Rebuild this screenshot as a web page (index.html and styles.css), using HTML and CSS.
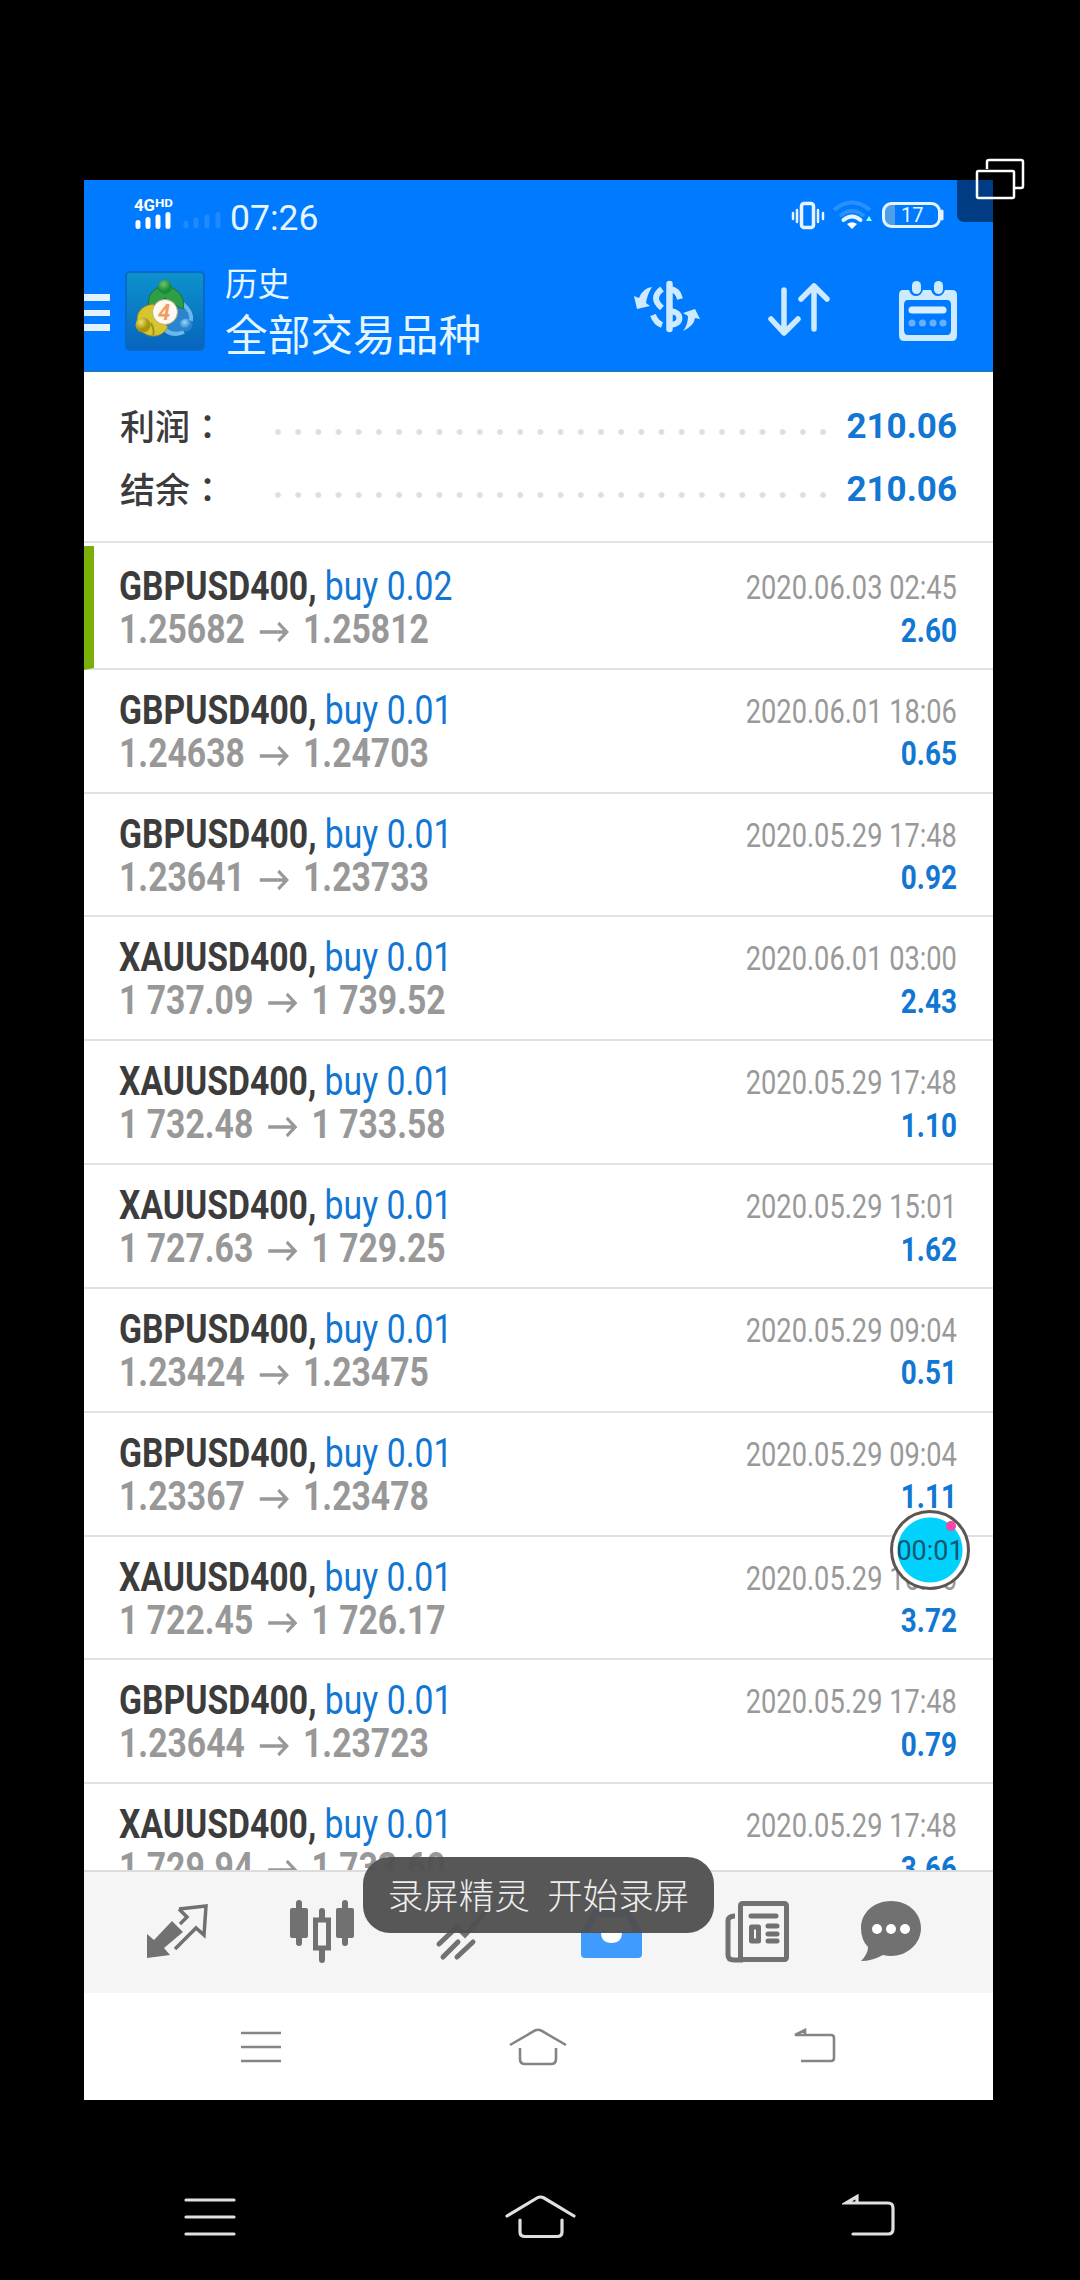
FILE: index.html
```html
<!DOCTYPE html>
<html lang="zh-CN">
<head>
<meta charset="utf-8">
<title>历史</title>
<link rel="stylesheet" href="styles.css">
</head>
<body>
<main class="screen">
  <header class="header">
    <div class="status">
      <svg class="signal" width="90" height="34" viewBox="0 0 90 34">
        <text x="0" y="13" font-size="16" font-weight="700" fill="#fff" textLength="21" lengthAdjust="spacingAndGlyphs">4G</text>
        <text x="21" y="9" font-size="11" font-weight="700" fill="#fff" textLength="18" lengthAdjust="spacingAndGlyphs">HD</text>
        <g stroke="#fff" stroke-width="5" stroke-linecap="round"><path d="M4 24.500V28.500M14 21.500V28.500M24 19V28.500M34 16.500V28.500"/></g>
        <g stroke="#2089ff" stroke-width="5" stroke-linecap="round"><path d="M52 25V28M62 22V28M73 19V28M84 16.500V28"/></g>
      </svg>
      <time class="clock">07:26</time>
      <svg class="device" width="154" height="34" viewBox="0 0 154 34" fill="none" stroke="#e6f4ff">
        <rect x="10.500" y="4.500" width="12" height="24" rx="2.500" stroke-width="3.500"/>
        <path d="M2 14v6M6 11v12M27 11v12M32 14v6" stroke-width="2.500" stroke-linecap="round"/>
        <path d="M43 11Q61 -4 79 11M49 17Q61 7 73 17" stroke="#2a90ff" stroke-width="4"/>
        <path d="M52.500 21Q61 14 69.500 21" stroke-width="4" stroke-linecap="round"/>
        <path d="M56 25Q61 21.500 66 25L61 30Z" fill="#fff" stroke="none"/>
        <path d="M78 17l3 5h-6z" fill="#9ff" stroke="none"/>
        <rect x="94" y="6" width="10" height="20" fill="#4f9fe8" stroke="none"/>
        <rect x="92.500" y="4.500" width="56" height="23" rx="8" stroke-width="3"/>
        <path d="M151 12v8" stroke-width="3" stroke-linecap="round"/>
        <text x="110" y="23" font-size="20" fill="#e6f4ff" stroke="none">17</text>
      </svg>
    </div>
    <div class="appbar">
      <svg class="burger" width="26" height="40" viewBox="0 0 26 40" fill="#e2f3ff"><path d="M0 1h26v7H0zM0 17h26v6H0zM0 31h26v7H0z"/></svg>
      <svg class="logo" width="80" height="80" viewBox="0 0 80 80">
        <defs>
          <linearGradient id="sky" x2="0" y2="1"><stop stop-color="#0d93cc"/><stop offset="1" stop-color="#0764bd"/></linearGradient>
          <radialGradient id="green" cx=".4" cy=".3"><stop stop-color="#6fc468"/><stop offset="1" stop-color="#198c3c"/></radialGradient>
          <radialGradient id="gold" cx=".35" cy=".3"><stop stop-color="#eee36a"/><stop offset="1" stop-color="#a8920e"/></radialGradient>
          <radialGradient id="blue" cx=".4" cy=".3"><stop stop-color="#9bd6f8"/><stop offset="1" stop-color="#2582cc"/></radialGradient>
        </defs>
        <rect x="1" y="1" width="78" height="78" rx="4" fill="url(#sky)" stroke="#0a69c8" stroke-width="2"/>
        <path d="M36 54Q46 68 61 60Q67 50 65 42Q62 33 55 30L50 48Z" fill="#2a84cf"/>
        <path d="M57 32Q68 41 66 50M36 54Q45 67 59 61" fill="none" stroke="#6bb9ec" stroke-width="4"/>
        <path d="M24 37C21 22 31 16 40 15C52 16 61 26 58 38L48 33L40 27L32 33Z" fill="#2f9f45" stroke="#176f38"/>
        <path d="M29 33C12 35 9 47 15 59C24 68 37 67 43 56L30 43Z" fill="#d5c62f" stroke="#8c8930"/>
        <path d="M26 52Q30 60 28 64" fill="none" stroke="#a0901c" stroke-width="2"/>
        <circle cx="40" cy="16" r="7" fill="url(#green)"/>
        <circle cx="18" cy="54" r="7.500" fill="url(#gold)"/>
        <circle cx="61" cy="54" r="6.500" fill="url(#blue)"/>
        <circle cx="40" cy="41" r="12.500" fill="#fff8f0" stroke="#bfae80"/>
        <text x="39" y="49" font-size="22" font-weight="700" font-style="italic" text-anchor="middle" fill="#eda05f">4</text>
      </svg>
      <div class="titles">
        <div class="subtitle">历史</div>
        <h1 class="title">全部交易品种</h1>
      </div>
      <div class="actions">
        <svg width="66" height="60" viewBox="0 0 66 60" fill="none" stroke="#cdeaff" stroke-width="6">
          <path d="M35.500 5V50" stroke-width="6.500" stroke-linecap="round"/>
          <path d="M28 10Q16 19 28 29M36 10Q44 11 46 20M36 32C49 33 48 46 36 46M19 36Q22 44 28 46"/>
          <path d="M18 8Q9 9 5 19L0 17L3 30L16 27L12 24Q13 16 18 8ZM49 52Q54 46 54 37L49 34L61 30L66 40L61 39Q60 47 49 52Z" fill="#cdeaff" stroke="none"/>
        </svg>
        <svg width="64" height="60" viewBox="0 0 64 60" fill="none" stroke="#cdeaff" stroke-width="5.500" stroke-linecap="round" stroke-linejoin="round"><path d="M17 11V54M4 40L17 54L31 40M47 50V7M34 20L47 7L60 20"/></svg>
        <svg width="60" height="64" viewBox="0 0 60 64">
          <path fill-rule="evenodd" fill="#cdeaff" d="M5 11H11Q13 17 18 17T25 11H33Q35 17 40 17T47 11H54Q59 11 59 16V56Q59 62 54 62H6Q1 62 1 56V16Q1 11 5 11ZM10 21Q6 21 6 26V51Q6 56 10 56H49Q53 56 53 51V26Q53 21 49 21Z"/>
          <rect x="14" y="2" width="9" height="13" rx="4.500" fill="#cdeaff"/><rect x="36" y="2" width="9" height="13" rx="4.500" fill="#cdeaff"/>
          <path d="M14 31H45" stroke="#d8efff" stroke-width="7" stroke-linecap="round"/>
          <g fill="#65b0ff"><circle cx="14" cy="44" r="3.500"/><circle cx="24.500" cy="44" r="3.500"/><circle cx="35" cy="44" r="3.500"/><circle cx="45" cy="44" r="3.500"/></g>
        </svg>
      </div>
    </div>
  </header>

  <section class="summary">
    <div class="total"><span class="total-name">利润<i lang="zh-TW">：</i></span><span class="dots"></span><b class="total-value">210.06</b></div>
    <div class="total"><span class="total-name">结余<i lang="zh-TW">：</i></span><span class="dots"></span><b class="total-value">210.06</b></div>
  </section>

  <section class="deals" id="deals"></section>

  <nav class="tabs">
    <svg width="64" height="66" viewBox="0 0 64 66"><path d="M2 34L9 40L27 21L38 32L19 48L25 55L2 58Z" fill="#717171"/><path d="M34 9L61 6L59 35L51 28L30 49M34 9L42 17L35 24" fill="none" stroke="#717171" stroke-width="3.500"/></svg>
    <svg width="64" height="66" viewBox="0 0 64 66" fill="#717171"><rect y="8" width="18" height="30" rx="2"/><rect x="46" y="8" width="18" height="30" rx="2"/><path d="M9 3V43M55 3V43M32 11V60" stroke="#717171" stroke-width="6" stroke-linecap="round"/><rect x="25.500" y="20" width="13" height="28" fill="#f5f5f5" stroke="#717171" stroke-width="5"/></svg>
    <svg width="64" height="66" viewBox="0 0 64 66" fill="none" stroke="#717171" stroke-width="5" stroke-linecap="round"><path d="M4 44L22 27L30 35L50 13M8 57L23 42M22 57L38 42"/></svg>
    <svg width="64" height="66" viewBox="0 0 64 66"><path d="M13 10H50L62 32V54Q62 58 58 58H5Q1 58 1 54V32Z" fill="#409bff"/><path d="M17 17H46L53 32H42Q42 43 31.500 43T21 32H10Z" fill="#fff"/></svg>
    <svg width="64" height="66" viewBox="0 0 64 66" fill="none" stroke="#717171" stroke-width="5" stroke-linejoin="round"><rect x="15.500" y="3.500" width="46" height="56" rx="2"/><path d="M10 16Q3 16 3 21V55Q3 60 9 60H18"/><path d="M26 16H51M43 26H52M43 34H52M43 41H52" stroke-linecap="round"/><rect x="26.500" y="27" width="7" height="14"/></svg>
    <svg class="chat" width="64" height="66" viewBox="0 0 64 66"><path d="M32 1C48 1 62 12 62 28S48 56 32 56Q28 56 24 55Q13 61 2 61Q9 54 9 47Q2 40 2 28C2 12 16 1 32 1Z" fill="#717171"/><g fill="#fff"><circle cx="18" cy="29" r="5"/><circle cx="32" cy="29" r="5"/><circle cx="46" cy="29" r="5"/></g></svg>
  </nav>

  <nav class="softkeys">
    <svg width="42" height="38" viewBox="0 0 42 38"><path d="M1 5H41M1 19H41M1 33H41"/></svg>
    <svg width="60" height="38" viewBox="0 0 60 38"><path d="M2 17L27 2.500Q30 1 33 2.500L58 17M12 20V31Q12 36 17 36H43Q48 36 48 31V20"/></svg>
    <svg width="44" height="38" viewBox="0 0 44 38"><path d="M8 33H38Q41 33 41 30V10Q41 7 38 7H2L12 2V7"/></svg>
  </nav>

  <div class="record"><span>00:01</span></div>
  <div class="toast">录屏精灵&nbsp; 开始录屏</div>
  <div class="corner"></div>
</main>

<svg class="windows" width="52" height="42" viewBox="0 0 52 42" fill="none" stroke="#fff" stroke-width="2.500"><path d="M12 11V4Q12 2 14 2H46Q48 2 48 4V28Q48 30 46 30H40"/><rect x="2" y="13" width="37" height="27" rx="1.500"/></svg>

<nav class="system">
  <svg width="52" height="44" viewBox="0 0 52 44"><path d="M2 5H50M2 22H50M2 39H50"/></svg>
  <svg class="home" width="74" height="46" viewBox="0 0 74 46"><path d="M3 22L33 4Q36.500 2 40 4L70 22M16 26V38Q16 42.500 21 42.500H53Q58 42.500 58 38V26"/></svg>
  <svg width="54" height="46" viewBox="0 0 54 46"><path d="M11 40H46Q51 40 51 35V14Q51 9 46 9H4L15 2.500V9"/></svg>
</nav>
<script src="deals.js"></script>
</body>
</html>
```
FILE: deals.js
```js
const deals = [
  ["GBPUSD400", "0.02", "1.25682", "1.25812", "2020.06.03 02:45", "2.60"],
  ["GBPUSD400", "0.01", "1.24638", "1.24703", "2020.06.01 18:06", "0.65"],
  ["GBPUSD400", "0.01", "1.23641", "1.23733", "2020.05.29 17:48", "0.92"],
  ["XAUUSD400", "0.01", "1 737.09", "1 739.52", "2020.06.01 03:00", "2.43"],
  ["XAUUSD400", "0.01", "1 732.48", "1 733.58", "2020.05.29 17:48", "1.10"],
  ["XAUUSD400", "0.01", "1 727.63", "1 729.25", "2020.05.29 15:01", "1.62"],
  ["GBPUSD400", "0.01", "1.23424", "1.23475", "2020.05.29 09:04", "0.51"],
  ["GBPUSD400", "0.01", "1.23367", "1.23478", "2020.05.29 09:04", "1.11"],
  ["XAUUSD400", "0.01", "1 722.45", "1 726.17", "2020.05.29 16:36", "3.72"],
  ["GBPUSD400", "0.01", "1.23644", "1.23723", "2020.05.29 17:48", "0.79"],
  ["XAUUSD400", "0.01", "1 729.94", "1 733.60", "2020.05.29 17:48", "3.66"]
];

const arrow = '<svg class="arrow" width="36" height="22" viewBox="0 0 36 22"><path d="M1 11H33M23 2L33 11L23 20"/></svg>';

document.getElementById("deals").innerHTML = deals.map(([symbol, lots, open, close, date, profit], i) => `
  <article class="deal${i === 0 ? " deal-marked" : ""}">
    <div class="deal-main">
      <div class="deal-name"><b>${symbol},</b> <span class="side">buy ${lots}</span></div>
      <div class="deal-prices">${open}${arrow}${close}</div>
    </div>
    <div class="deal-side">
      <div class="deal-date">${date}</div>
      <div class="deal-profit">${profit}</div>
    </div>
  </article>`).join("");
```
FILE: styles.css
```css
* { box-sizing: border-box; }
body {
  margin: 0;
  width: 1080px;
  height: 2280px;
  overflow: hidden;
  background: #000;
  font-family: Roboto, "Noto Sans CJK SC", sans-serif;
  position: relative;
}
svg { display: block; flex: none; }

.screen {
  position: relative;
  display: flex;
  flex-direction: column;
  width: 909px;
  height: 1920px;
  margin: 180px 0 0 84px;
  background: #fff;
  overflow: hidden;
}

/* Header */
.header { height: 192px; background: #007aff; border-bottom: 2px solid #1878c9; flex: none; }
.status { height: 76px; padding: 18px 48px 0 50px; display: flex; align-items: flex-start; color: #e6f6ff; }
.clock { margin-left: 6px; margin-top: 1px; font-size: 35.500px; line-height: 38px; }
.device { margin-left: auto; margin-top: 1px; }
.appbar { display: flex; height: 114px; }
.burger { margin-top: 37px; }
.logo { margin: 15px 0 0 15px; }
.titles { margin-left: 20px; color: #e6f6ff; }
.subtitle { font-size: 32.500px; line-height: 40px; margin-top: 9px; }
.title { margin: 1px 0 0; font-size: 42.700px; line-height: 60px; font-weight: 400; }
.actions { display: flex; margin-left: auto; padding: 23px 35px 0 0; gap: 67px; }

/* Totals */
.summary { height: 171px; padding: 23px 36px 0 36px; border-bottom: 2px solid #e2e2e2; flex: none; }
.total { display: flex; height: 63px; align-items: center; }
.total-name { width: 150px; font-size: 35px; font-weight: 500; color: #3c3c3c; line-height: 63px; }
.total-name i { font-family: "Noto Sans CJK TC", sans-serif; font-style: normal; }
.dots {
  width: 563px;
  height: 6px;
  margin-top: 11px;
  background: radial-gradient(circle at 8px 3px, #dedede 2.400px, transparent 3.400px) 0 0 / 20.200px 6px repeat-x;
}
.total-value { margin-left: auto; font-size: 35px; color: #1276d3; }

/* Deals */
.deals { flex: none; height: 1327px; padding-top: 3px; overflow: hidden; }
.deal {
  display: flex;
  justify-content: space-between;
  height: 123.830px;
  padding: 19px 36px 0 35px;
  border-bottom: 2px solid #e2e2e2;
}
.deal-marked { border-left: 10px solid #7aae08; padding-left: 25px; }
.deal-name, .deal-prices { font-size: 40px; line-height: 43px; white-space: pre; transform: scaleX(.843); transform-origin: left; }
.deal-name { color: #3c3c3c; }
.side { color: #1276d3; }
.deal-prices { display: flex; color: #989898; font-weight: 700; }
.arrow { margin: 13px 16px 0 17px; fill: none; stroke: #989898; stroke-width: 3.500; }
.deal-date, .deal-profit { font-size: 34px; line-height: 42.500px; text-align: right; transform: scaleX(.8); transform-origin: right; white-space: pre; }
.deal-date { color: #999; margin-top: 1px; }
.deal-profit { color: #1276d3; font-weight: 700; transform: scaleX(.82); }

/* Bottom bars */
.tabs {
  display: flex;
  gap: 81px;
  align-items: center;
  flex: none;
  height: 123px;
  padding: 0 0 0 61px;
  background: #f5f5f5;
  border-top: 2px solid #dcdcdc;
}
.chat { margin-left: -11px; }
.softkeys { display: flex; justify-content: space-between; align-items: center; height: 107px; padding: 0 156px 0 156px; fill: none; stroke: #858585; stroke-width: 2.600; }

/* Overlays */
.toast {
  position: absolute;
  left: 279px;
  top: 1677px;
  width: 351px;
  height: 76px;
  border-radius: 27px;
  background: rgba(80, 80, 80, .96);
  color: #eee;
  font-size: 35.500px;
  font-weight: 300;
  line-height: 81px;
  text-align: center;
  white-space: nowrap;
}
.record {
  position: absolute;
  left: 806px;
  top: 1330px;
  width: 80px;
  height: 80px;
  border: 3px solid #5c5552;
  border-radius: 50%;
  background: radial-gradient(circle at 58px 13px, #f547a5 4.500px, transparent 5.500px), radial-gradient(circle at center, #00d2fc 32px, #fff 33px);
  color: #14566f;
  font-size: 27px;
  line-height: 77px;
  text-align: center;
  white-space: nowrap;
}
.record span { margin: 0 -5px; }
.corner { position: absolute; right: 0; top: 0; width: 36px; height: 42px; background: rgba(0, 18, 50, .6); border-bottom-left-radius: 7px; }
.windows { position: absolute; left: 975px; top: 158px; }

.system { display: flex; justify-content: space-between; align-items: center; height: 180px; padding: 53px 184px 0; fill: none; stroke: #e0e0e0; stroke-width: 3.200; stroke-linecap: round; }
.home { margin-left: 4px; }
```
